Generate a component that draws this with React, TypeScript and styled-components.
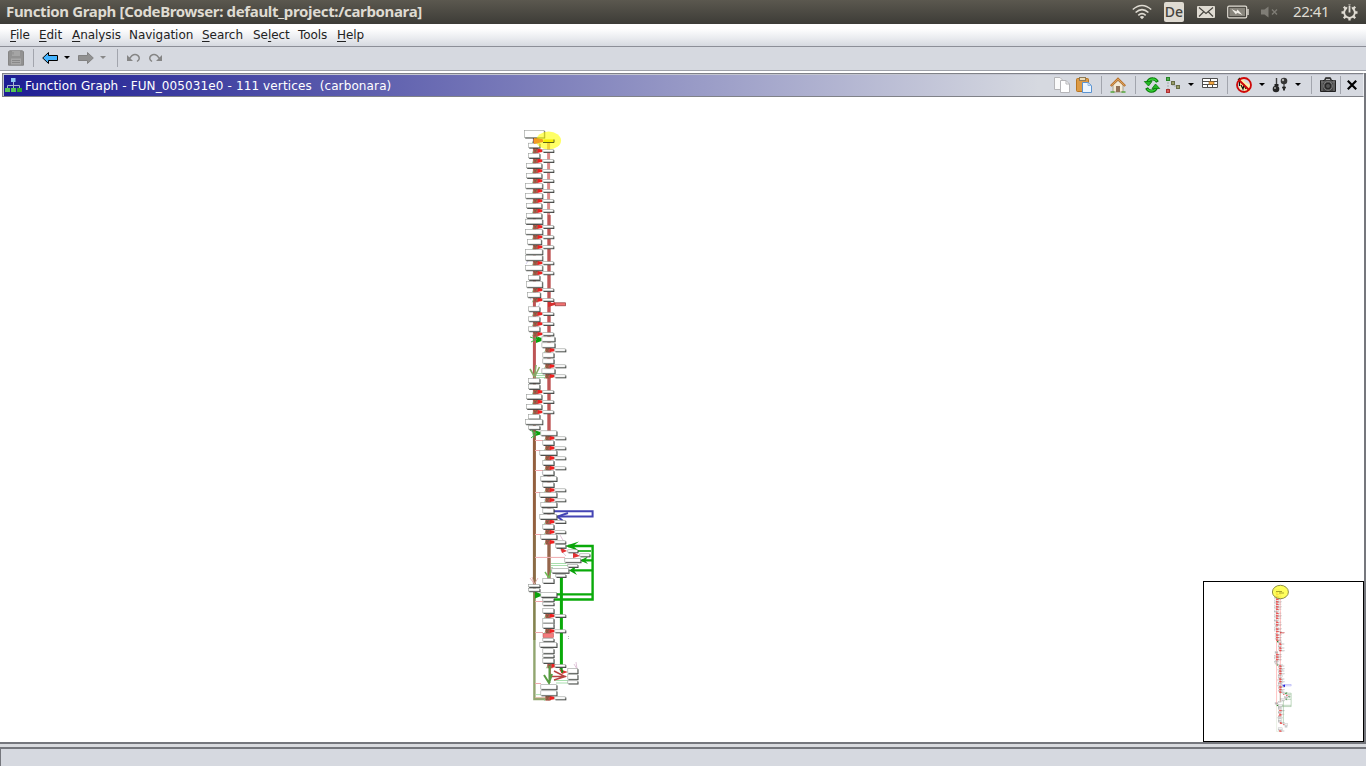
import React from 'react';
import styled, { createGlobalStyle } from 'styled-components';

const Global = createGlobalStyle`
  * { box-sizing: border-box; }
  html, body { margin: 0; padding: 0; background: #fff; overflow: hidden; }
`;

const Screen = styled.div`
  width: 1366px;
  height: 768px;
  display: flex;
  flex-direction: column;
  background: #fff;
  font-family: "DejaVu Sans", sans-serif;
  font-size: 12px;
  color: #222;
  overflow: hidden;
`;

const SystemBar = styled.header`
  height: 24px;
  flex: none;
  display: flex;
  align-items: center;
  padding-left: 6px;
  background: linear-gradient(#5b584f, #3d3c37);
  color: #dfdbd2;
`;

const WindowTitle = styled.div`
  flex: 1;
  height: 24px;
  font: bold 15px/22px "Noto Sans", sans-serif;
  letter-spacing: -0.355px;
  white-space: pre;
`;

const Tray = styled.div`
  display: flex;
  align-items: center;
  width: 235px;
  height: 24px;
`;

const LanguageBadge = styled.div`
  width: 20px;
  height: 20px;
  border-radius: 2px;
  background: #dfdbd2;
  color: #46443e;
  font: 500 14px/20px "Noto Sans", sans-serif;
  text-align: center;
`;

const Clock = styled.div`
  width: 37px;
  height: 24px;
  font: 15px/23px "Noto Sans", sans-serif;
  white-space: nowrap;
  letter-spacing: -0.45px;
`;

const MenuBar = styled.nav`
  height: 23px;
  flex: none;
  display: flex;
  padding-left: 10px;
  background: linear-gradient(#fff 20%, #e9ebef 65%, #d6d9e0);
  border-bottom: 1px solid #8c8f98;
`;

const MenuItem = styled.div<{ $w: number }>`
  width: ${(p) => p.$w}px;
  line-height: 22px;
  white-space: nowrap;
  letter-spacing: -0.05px;
  u { text-underline-offset: 2px; text-decoration-thickness: 1px; }
`;

const ToolBar = styled.div`
  height: 24px;
  flex: none;
  display: flex;
  align-items: center;
  background: #d6d9e0;
  border-bottom: 1px solid #a0a3ab;
  padding: 0 0 1px 8px;
`;

const Slot = styled.div<{ $gap?: number; $w?: number }>`
  flex: none;
  margin-left: ${(p) => p.$gap ?? 0}px;
  width: ${(p) => p.$w ?? 16}px;
  display: flex;
  align-items: center;
  svg { display: block; flex: none; overflow: visible; }
`;

const Divider = styled.div<{ $gap: number }>`
  flex: none;
  width: 1px;
  height: 18px;
  margin-left: ${(p) => p.$gap}px;
  background: #a2a5ad;
`;

const Caret = styled.div<{ $gap: number; $dim?: boolean }>`
  flex: none;
  margin-left: ${(p) => p.$gap}px;
  margin-top: -1px;
  border: 3px solid transparent;
  border-bottom: 0;
  border-top-color: ${(p) => (p.$dim ? '#888' : '#000')};
`;

const Panel = styled.main`
  flex: none;
  height: 671px;
  margin-top: 2px;
  width: 1366px;
  display: flex;
  flex-direction: column;
  border-right: 2px solid #75777d;
  border-bottom: 2px solid #75777d;
`;

const PanelHeader = styled.div`
  height: 24px;
  flex: none;
  display: flex;
  align-items: center;
  margin-left: 2px;
  padding: 0 0 0 2px;
  border: 1px solid #808288;
  border-right-color: #eceef2;
  box-shadow: inset 1px 1px 0 #c3c5d0;
  background: linear-gradient(90deg, #1d1d93 0, #d6d9e0 1036px);
`;

const PanelTitle = styled.div`
  width: 1030px;
  padding: 2px 0 0 4px;
  color: #fff;
  white-space: pre;
  line-height: 20px;
  letter-spacing: 0.12px;
`;

const Canvas = styled.div`
  flex: 1;
  position: relative;
  background: #fff;
  > svg { display: block; }
`;

const Overview = styled.div`
  position: absolute;
  right: 0;
  bottom: 0;
  width: 161px;
  height: 161px;
  border: 1px solid #000;
  background: #fff;
  svg { display: block; }
`;

const Gutter = styled.div`
  height: 3px;
  flex: none;
  background: #d9dbdf;
`;

const StatusBar = styled.footer`
  height: 19px;
  flex: none;
  border-top: 2px solid #75777d;
  border-left: 1px solid #75777d;
  background: #d6d9e0;
`;

type Box = [number, number, number, number];

const col = (x: number, w: number, h: number, ys: number[]): Box[] => ys.map((y) => [x, y, w, h]);

const sideLeft = [139, 149.3, 159.3, 169.3, 179.3, 189.3, 199.3, 209.3, 225.3, 235.5, 245.5, 261.5, 271.5, 288.3, 298.3, 312.3, 322.3, 332.5, 390.3, 400.3, 410.5];
const sideRight = [348.6, 364.6, 374.6, 436.6, 446.6, 456.6, 466.6, 488.6, 498.6, 520.3, 530.5, 540.6, 614.3, 629.6, 664.3, 696.6];

const boxes: Box[] = [
  [524.3, 130.3, 20, 7.3],
  ...col(528.3, 11.3, 4.7, [143, 153.3, 275.3, 306.6, 316.6, 326.6, 378.3, 384.3, 414.3]),
  [528.3, 425.6, 11.3, 3.7],
  ...col(526.3, 15.3, 4.7, [163.3, 173.3, 203.3, 213.3, 394.3, 404.3]),
  ...col(525.3, 17.1, 5, [183.3, 193.3, 219, 229.3, 249.3, 255.3, 265.3, 419.3]),
  [527.3, 239.3, 14, 5],
  [526.3, 281.3, 16, 6],
  [527.3, 292.3, 13, 5],
  ...col(541.7, 13, 4.8, [336.6, 342.6, 368.6]),
  ...col(542.6, 11.1, 4.8, [352.6, 358.6, 440.3, 460.3, 470.3, 482.3, 508.3, 524.3, 578.3, 608.3, 618.3, 623.3, 648.5, 658.3]),
  ...col(542.6, 11.1, 3, [598.3, 602.3, 638.3, 654.3]),
  ...col(540.6, 16, 4.8, [430.6, 476.3, 502.3, 534.3, 592.3, 684.5, 690.6]),
  ...col(539.6, 17, 4.8, [450.3, 492.3, 514.3, 642.3]),
  [555.6, 544.3, 10, 3.6],
  [567.6, 549.6, 10, 2.8],
  [579.6, 553.6, 10, 2.8],
  [564.6, 558.3, 16, 4],
  [567.6, 564.3, 10, 2.8],
  [551.6, 568.3, 17, 4.6],
  [555.6, 574.3, 10, 2.8],
  [528.3, 584.3, 11.3, 2.8],
  [528.3, 588.3, 11.3, 3],
  [567.6, 668.3, 10, 5],
  [567.6, 674.3, 10, 5],
  [567.6, 680.6, 10, 3],
  ...col(542.6, 10.8, 2.8, sideLeft.slice(1)),
  ...col(554.6, 10.8, 2.8, sideRight),
];

function Graph({ mini = false }: { mini?: boolean }) {
  const k = mini ? 0.7 : 1;
  const green = mini ? '#7fae7f' : '#0aaa0a';
  const cluster = (x: number, y: number, i: number) => (
    <g key={`${x}-${i}`}>
      {!mini && <path d={`M${x - 1} ${y - 4}L${x + 2} ${y - 2}L${x - 1} ${y + 4}`} fill="none" stroke="#83cf8b" strokeWidth="1" />}
      <path d={`M${x} ${y - 2}H${x + 5}V${y + 4}H${x}Z`} fill={mini ? '#e83030' : '#b9504a'} />
      {!mini && <path d={`M${x + 0.5} ${y - 1}L${x + 3} ${y + 4}M${x + 1} ${y + 3}L${x + 5} ${y - 2}`} stroke="#2f7d34" strokeWidth=".7" strokeDasharray="1 .8" />}
      <path d={`M${x + 4.6} ${y - 0.6}L${x + 9} ${y + 0.2}V${y + 2.6}L${x + 4.6} ${y + 3.4}Z`} fill="#ee2020" />
    </g>
  );
  const clusters = (
    <g>
      {sideLeft.map((y, i) => cluster(533.3, y, i))}
      {sideRight.map((y, i) => cluster(545.4 + (y > 660 && y < 690 ? 2 : 0), y, i))}
    </g>
  );
  return (
    <g>
      <g fill="none" strokeWidth={3 * k}>
        <path d="M548.6 141V215" stroke={mini ? '#ff8080' : '#db8c8c'} />
        <path d="M549 215V540" stroke={mini ? '#ff8080' : '#bf5656'} strokeWidth={3.4 * k} />
        <path d="M549 540V580" stroke="#95654b" strokeWidth={3.4 * k} />
        <path d="M534.4 136V378" stroke={mini ? '#ff8080' : '#bd5555'} />
        <path d="M534.4 378V430" stroke={mini ? '#ff8080' : '#a4604d'} />
        <path d="M534.4 430V535" stroke={mini ? '#ff8a8a' : '#93603f'} />
        <path d="M534.4 535V590" stroke={mini ? '#ff8a8a' : '#8b6b45'} />
        <path d="M534.4 590V640" stroke={mini ? '#e4d4c0' : '#84834f'} strokeWidth={2.6 * k} />
        <path d="M534.4 640V699H551" stroke={mini ? '#c9dcc0' : '#92a670'} strokeWidth={2.4 * k} />
      </g>
      {!mini && (
        <g fill="none" strokeWidth=".8">
          <path d="M535 440.5H543M535 450.5H540M535 470.5H543M535 492.5H540M535 534.5H541M535 557.4H565M535 601.5H543M535 632.5H543M535 683.5H541" stroke="#efa9ad" strokeWidth="1" />
          <path d="M536 373.5H543M536 375.5H553M536 377.5H553M551 563.5H566M551 565.5H568M551 567.5H553M536 694.6H541M554 680.5H568M556 683H573" stroke="#a9dfae" strokeWidth="1" />
          <path d="M535 697.6H551" stroke="#dfb29a" />
          <path d="M530 369L534.5 377L539.5 367M534.5 377L536 365" stroke="#87a965" strokeWidth="1.6" />
          <path d="M545 572L549 578L551 570" stroke="#6dbb55" strokeWidth="1.4" />
          <path d="M530 578L534.4 584L538 578M532 577L534.4 584" stroke="#dfa8a8" />
          <path d="M560 535L564 542M557 546L566 556M574 664L577 669L576 662" stroke="#d8b5cf" />
          <path d="M531 300L529 293M540 303L536 312M530 258L526 264M542 472L546 479M544 499L548 505" stroke="#b8b0df" strokeWidth=".6" />
        </g>
      )}
      <g fill="none" stroke={mini ? '#a3a3f5' : '#4444b4'} strokeWidth={mini ? 2.4 : 2}>
        <path d="M553.7 511.3H592.6V516.5H558" />
        {!mini && <path d="M568 513L557.5 516.5L563 521" />}
      </g>
      {mini && <path d="M557 516.5L568 511V522Z" fill="#2222e0" />}
      <g fill="none" stroke={green} strokeWidth={mini ? 2 : 2.4}>
        <path d="M568 546H592.6V599.5H554M556 594.4H592M582 560.4H592M573 570.4H592" />
        <path d="M578 551H591" strokeWidth="1.6" />
        <path d="M561.4 577V667" strokeWidth={mini ? 2 : 3} />
      </g>
      <g fill={mini ? '#2c862c' : '#0aa30a'}>
        <path d="M565 546L579 541.5L573 546L579 551ZM580 560.5L588 556.5L585 560.5L588 564ZM569 570.5L576 566L574 570.5L577 575Z" />
        <path d="M536 336L541.5 338V341L536 343ZM535.5 430.5L540.5 432V434.5L535.5 436ZM535 591.5L541 594V596L535 598.5Z" />
      </g>
      {!mini && (
        <path d="M530 337L536 339M531 342L537 339M533 334L538 338M530 430L537 434M531 438L537 433M532 428L534 438" fill="none" stroke="#45b54d" strokeWidth="1" />
      )}
      {!mini && clusters}
      <path d="M548 301L552 303L555 302V305L548 307Z" fill="#d72f2f" />
      <path d="M560 547L567 551L562 553ZM573 552L580 556L573 558ZM559 669L568 672L562 674Z" fill="#e23333" />
      {!mini && (
        <g fill="none">
          <path d="M550 668V676.5H566M554 671L565 676.5L554 680" stroke="#b94444" strokeWidth="1.6" />
          <path d="M549.5 666V683M544 675L549 683L552 674" stroke="#579c41" strokeWidth="2" />
          <path d="M562 665V673M559 666L563 672" stroke="#178d17" strokeWidth="1.4" />
          <path d="M568.5 636V637M568.5 638V639" stroke="#999" strokeWidth=".7" />
        </g>
      )}
      {boxes.map(([x, y, w, h], i) =>
        mini ? (
          <rect key={i} x={x} y={y} width={w} height={h} fill="#fff" fillOpacity=".2" stroke="#666" strokeWidth="1.4" strokeOpacity=".55" />
        ) : (
          <g key={i}>
            <rect x={x + 0.9} y={y + 0.9} width={w} height={h} fill="#3c3f3c" />
            <rect x={x + 0.2} y={y + 0.2} width={w - 0.4} height={h - 0.4} fill="#fff" stroke="#999d99" strokeWidth=".6" />
          </g>
        )
      )}
      {mini && clusters}
      <rect x="543" y="633.4" width="10.6" height="4.2" fill="#f47b7b" stroke="#b15555" strokeWidth=".5" />
      <rect x="555.2" y="302.8" width="10.4" height="3" fill="#f17171" stroke="#913c3c" strokeWidth=".7" />
      {!mini && (
        <g>
          <ellipse cx="548.6" cy="140.5" rx="12.5" ry="9" fill="#ffff00" fillOpacity=".6" />
          <path d="M534 138L543 139.5V142L534 144Z" fill="#f39e22" />
          <rect x="543.3" y="139.4" width="10.4" height="2.8" fill="#f6f000" />
          <path d="M543 142.5H554V139.5" fill="none" stroke="#5e6416" />
        </g>
      )}
    </g>
  );
}

const Icon = ({ children, w = 16, h = 16 }: { children: React.ReactNode; w?: number; h?: number }) => (
  <svg width={w} height={h} viewBox={`0 0 ${w} ${h}`} fill="none">{children}</svg>
);

const Arrow = ({ fill, stroke, flip }: { fill: string; stroke: string; flip?: boolean }) => (
  <Icon>
    <path transform={flip ? 'translate(16 0) scale(-1 1)' : undefined} d="M.7 8L6.5 2.5V5.5H15.5V10.5H6.5V13.5Z" fill={fill} stroke={stroke} />
  </Icon>
);

const Turn = ({ flip }: { flip?: boolean }) => (
  <Icon w={15}>
    <g transform={flip ? 'translate(15 0) scale(-1 1)' : undefined}>
      <path d="M3.5 8.5L6 5.6Q9 3.4 12 5.6Q15 8.5 11 11.5" stroke="#858585" strokeWidth="1.5" />
      <path d="M1 5V11H7Z" fill="#858585" />
    </g>
  </Icon>
);

const Gear = () => (
  <Icon w={17} h={17}>
    <circle cx="8.5" cy="8.5" r="5.3" stroke="#dfdbd2" strokeWidth="1.8" />
    <path d="M8.5 .5V3M8.5 14V16.5M.5 8.5H3M14 8.5H16.5M2.8 2.8L4.6 4.6M12.4 12.4L14.2 14.2M2.8 14.2L4.6 12.4M12.4 4.6L14.2 2.8" stroke="#dfdbd2" strokeWidth="2.3" />
    <path d="M8.5 1V8.5" stroke="#4b4943" strokeWidth="4.4" />
    <path d="M8.5 1.5V8.5" stroke="#dfdbd2" strokeWidth="1.8" />
  </Icon>
);

export default function App() {
  return (
    <Screen>
      <Global />
      <SystemBar>
        <WindowTitle>Function Graph [CodeBrowser: default_project:/carbonara]</WindowTitle>
        <Tray>
          <Slot $gap={1} $w={20}>
            <Icon w={20} h={16}>
              <g stroke="#dfdbd2" strokeWidth="1.6">
                <path d="M.8 5.5Q10-2.5 19.2 5.5M3.6 8.5Q10 2.8 16.4 8.5M6.3 11.4Q10 8 13.7 11.4" />
              </g>
              <path d="M7.8 13Q10 11.2 12.2 13L10 15.3Z" fill="#dfdbd2" />
            </Icon>
          </Slot>
          <Slot $gap={12} $w={20}><LanguageBadge>De</LanguageBadge></Slot>
          <Slot $gap={13} $w={18}>
            <Icon w={18} h={12}>
              <rect width="18" height="12" rx="1" fill="#dfdbd2" />
              <path d="M2 1.5L9 7.5L16 1.5M2 10.5L6.5 6M16 10.5L11.5 6" stroke="#46443e" strokeWidth="1.1" />
            </Icon>
          </Slot>
          <Slot $gap={12} $w={22}>
            <Icon w={22} h={12}>
              <rect x=".7" y=".2" width="19" height="11.6" rx="1.4" stroke="#dfdbd2" strokeWidth="1.2" />
              <rect x="2.4" y="2" width="15.6" height="8" fill="#88857c" />
              <path d="M21 3V9" stroke="#dfdbd2" strokeWidth="1.4" />
              <path d="M4.5 3L9.5 5.5L10.5 3.5L15.5 9L10 6.8L9 8.5Z" fill="#f2efe8" />
            </Icon>
          </Slot>
          <Slot $gap={12} $w={18}>
            <Icon w={18} h={12}>
              <path d="M0 3.5H3.5L7.5 .5V11.5L3.5 8.5H0Z" fill="#7f7d76" />
              <path d="M11 3.5L16 8.5M16 3.5L11 8.5" stroke="#7f7d76" strokeWidth="1.4" />
            </Icon>
          </Slot>
          <Slot $gap={14} $w={37}><Clock>22:41</Clock></Slot>
          <Slot $gap={11} $w={17}><Gear /></Slot>
        </Tray>
      </SystemBar>

      <MenuBar>
        <MenuItem $w={29}><u>F</u>ile</MenuItem>
        <MenuItem $w={33}><u>E</u>dit</MenuItem>
        <MenuItem $w={57}><u>A</u>nalysis</MenuItem>
        <MenuItem $w={73}>Navigation</MenuItem>
        <MenuItem $w={51}><u>S</u>earch</MenuItem>
        <MenuItem $w={45}>Se<u>l</u>ect</MenuItem>
        <MenuItem $w={39}>Tools</MenuItem>
        <MenuItem $w={30}><u>H</u>elp</MenuItem>
      </MenuBar>

      <ToolBar>
        <Slot>
          <Icon>
            <path d="M1.5 .8H14.5L15.5 1.8V15.2H.5V1.8Z" fill="#929292" stroke="#858585" />
            <rect x="4" y="1" width="8" height="5" fill="#a5a5a5" />
            <rect x="3" y="8.5" width="10" height="6" fill="#a8a8a8" />
            <path d="M4 10.5H12M4 12.5H12M5 2V4.5" stroke="#898989" />
          </Icon>
        </Slot>
        <Divider $gap={9} />
        <Slot $gap={8}><Arrow fill="#44b4ff" stroke="#000" /></Slot>
        <Caret $gap={6} />
        <Slot $gap={8}><Arrow fill="#919191" stroke="#828282" flip /></Slot>
        <Caret $gap={6} $dim />
        <Divider $gap={11} />
        <Slot $gap={8} $w={15}><Turn /></Slot>
        <Slot $gap={7} $w={15}><Turn flip /></Slot>
      </ToolBar>

      <Panel>
        <PanelHeader>
          <Slot>
            <Icon w={17}>
              <path d="M8.5 4V8M2.5 11V8.5H14.5V11M8.5 8V11" stroke="#a9b6d0" />
              <rect x="6" y="1" width="4.5" height="4" fill="#8fc7f4" />
              <rect x="0" y="11" width="5" height="4" fill="#57c557" />
              <rect x="6" y="11" width="5" height="4" fill="#57c557" />
              <rect x="12" y="11" width="5" height="4" fill="#2ba32b" />
            </Icon>
          </Slot>
          <PanelTitle>Function Graph - FUN_005031e0 - 111 vertices  (carbonara)</PanelTitle>
          <Slot $gap={3}>
            <Icon>
              <path d="M.5 .5H6L9.5 4V12.5H.5Z" fill="#fafafa" stroke="#b5b5b8" />
              <path d="M6.5 3.5H12L15.5 7V15.5H6.5Z" fill="#fff" stroke="#b5b5b8" />
              <path d="M12 3.5V7H15.5" stroke="#b5b5b8" />
            </Icon>
          </Slot>
          <Slot $gap={6}>
            <Icon>
              <rect x=".5" y="1.5" width="12" height="13" rx="1" fill="#dc9a45" stroke="#b87522" />
              <rect x="3.5" y=".5" width="6" height="3" fill="#eadbb8" stroke="#8d7a58" />
              <path d="M6.5 5.5H12L15.5 8.5V15.5H6.5Z" fill="#edf6ff" stroke="#5a93d1" />
              <path d="M12 5.5V8.5H15.5" stroke="#93b8df" />
            </Icon>
          </Slot>
          <Divider $gap={9} />
          <Slot $gap={8}>
            <Icon>
              <path d="M3 8L8 3.5L13 8V15H3Z" fill="#f4ead5" stroke="#aaa28f" />
              <path d="M.8 9L8 2L15.2 9" stroke="#b8732e" strokeWidth="2.4" />
              <path d="M1.5 8.4L8 2.1L14.5 8.4" stroke="#e8ae65" strokeWidth=".8" />
              <rect x="6" y="9" width="4" height="6" fill="#927257" />
              <path d="M.5 15H4.5M11.5 15H15.5" stroke="#57a63d" strokeWidth="1.6" />
            </Icon>
          </Slot>
          <Divider $gap={9} />
          <Slot $gap={8}>
            <Icon>
              <path d="M3.5 5.5Q5 1.5 9 1.8Q11.5 1.8 13.5 5" stroke="#087a08" strokeWidth="3.2" />
              <path d="M3.8 5Q5.5 2 9 2Q11 2 12.8 4" stroke="#35cf35" strokeWidth="1.4" />
              <path d="M.3 4.5H8L4.5 9Z" fill="#24b824" stroke="#087a08" strokeWidth=".8" />
              <path d="M12.5 10.5Q11 14.5 7 14.2Q4.5 14.2 2.5 11" stroke="#087a08" strokeWidth="3.2" />
              <path d="M12.2 11Q10.5 14 7 14Q5 14 3.2 12" stroke="#35cf35" strokeWidth="1.4" />
              <path d="M15.7 11.5H8L11.5 7Z" fill="#24b824" stroke="#087a08" strokeWidth=".8" />
            </Icon>
          </Slot>
          <Slot $gap={6} $w={17}>
            <Icon>
              <path d="M3 2L7 6L12 10M2 5V12M7 7V9H11" stroke="#a6a8a8" strokeDasharray="2 1" />
              <rect x=".5" y=".5" width="3" height="3" fill="#52ae52" stroke="#278427" />
              <rect x="5.5" y="4.5" width="3" height="3" fill="#999d69" stroke="#686c46" />
              <rect x="10.5" y="8.5" width="3" height="3" fill="#999d69" stroke="#686c46" />
              <rect x=".5" y="12.5" width="3" height="3" fill="#db5959" stroke="#ac3030" />
            </Icon>
          </Slot>
          <Caret $gap={5} />
          <Slot $gap={8}>
            <Icon h={15}>
              <path d="M.5 .5H15.5V9.5H.5ZM.5 3.5H15.5M.5 6.5H15.5M8.5 .5V3.5M5.5 6.5V9.5M10.5 6.5V9.5" fill="#fff" stroke="#4e4e4e" />
              <rect x="7" y="3.5" width="5" height="3" fill="#f4a640" stroke="#775021" strokeWidth=".6" />
            </Icon>
          </Slot>
          <Divider $gap={9} />
          <Slot $gap={8}>
            <Icon>
              <path d="M2 1H6L9 5L14 8V15H9L6 12L4 13Z" fill="#fff0a8" />
              <path d="M2 3L4 1M3.5 4V9M5 8L7 12L8 8L10 12" stroke="#111" strokeWidth="1.2" />
              <circle cx="8" cy="8" r="7" stroke="#cf0808" strokeWidth="1.8" />
              <path d="M3.2 3.2L12.8 12.8" stroke="#cf0808" strokeWidth="2" />
            </Icon>
          </Slot>
          <Caret $gap={7} />
          <Slot $gap={7}>
            <Icon>
              <path d="M4.5 1V8" stroke="#3c3c3c" strokeWidth="1.4" />
              <circle cx="4" cy="12" r="3.3" fill="#262626" />
              <path d="M2.5 8H6.5" stroke="#222" strokeWidth="2" />
              <circle cx="12" cy="4" r="3.3" fill="#363636" />
              <circle cx="11" cy="3" r="1.2" fill="#b3b3b3" />
              <circle cx="3" cy="11" r="1" fill="#aaa" />
              <path d="M12 7V11M10.5 10H13.5L12 13.5Z" stroke="#252525" fill="#252525" />
            </Icon>
          </Slot>
          <Caret $gap={7} />
          <Divider $gap={10} />
          <Slot $gap={8}>
            <Icon>
              <path d="M4.5 3.5L5.5 .8H10.5L11.5 3.5H15.5V14.5H.5V3.5Z" fill="#444" stroke="#222" />
              <path d="M1 5H15M2 3V14M14 3V14" stroke="#777" />
              <circle cx="8" cy="9" r="4.2" fill="#282828" stroke="#888" />
              <circle cx="8" cy="9" r="2" fill="#555" />
              <path d="M6 2.5H10" stroke="#bbb" />
            </Icon>
          </Slot>
          <Divider $gap={4} />
          <Slot $gap={6} $w={10}>
            <Icon w={10} h={10}><path d="M.8 .8L9.2 9.2M9.2 .8L.8 9.2" stroke="#000" strokeWidth="2.2" /></Icon>
          </Slot>
        </PanelHeader>
        <Canvas>
          <svg width="1364" height="645" viewBox="0 97 1364 645"><Graph /></svg>
          <Overview>
            <svg width="159" height="159" viewBox="1204 582 159 159">
              <g transform="translate(1143 556.7) scale(.25)"><Graph mini /></g>
              <ellipse cx="1280.4" cy="592" rx="8" ry="6.7" fill="#ffff33" fillOpacity=".8" stroke="#8e8e48" />
              <path d="M1276 591.5H1282M1279 593H1284" stroke="#a9a52a" />
            </svg>
          </Overview>
        </Canvas>
      </Panel>
      <Gutter />
      <StatusBar />
    </Screen>
  );
}
